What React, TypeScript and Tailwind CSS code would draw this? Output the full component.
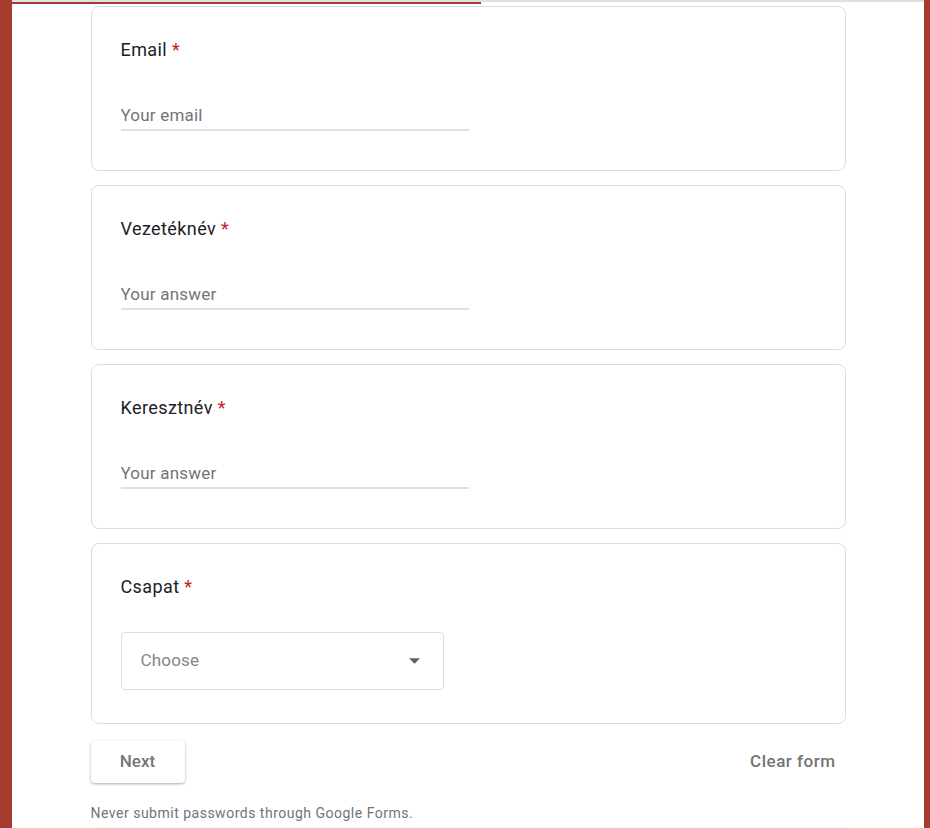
import { ReactNode } from 'react';

const FONT = { fontFamily: 'Roboto, "Liberation Sans", Arial, sans-serif' };

function Card({ children }: { children: ReactNode }) {
  return (
    <div className="w-[755px] mx-auto bg-white border border-[#dadce0] rounded-lg px-[29px] pt-[31px]">
      {children}
    </div>
  );
}

function Title({ label }: { label: string }) {
  return (
    <div className="text-[18px] leading-6 tracking-[0.4px] text-[#202124]">
      {label} <span className="text-[#c5221f]">*</span>
    </div>
  );
}

function TextQuestion({ label, placeholder }: { label: string; placeholder: string }) {
  return (
    <Card>
      <div className="pb-[39px]">
        <Title label={label} />
        <div className="mt-[41px] w-[348px] border-b-2 border-[#e0e0e0] pb-[1px]">
          <input
            type="text"
            placeholder={placeholder}
            className="w-full text-[17px] leading-6 tracking-[0.2px] outline-none bg-transparent text-[#202124] placeholder-[#70757a]"
          />
        </div>
      </div>
    </Card>
  );
}

export default function App() {
  return (
    <div className="flex min-h-[828px] bg-white" style={FONT}>
      <div className="w-[12px] shrink-0 bg-[#a63b2d]" />
      <div className="flex-1 min-w-0">
        <div className="h-[2px] bg-[#e0e0e0]" />
        <div className="h-[2px]">
          <div className="h-full w-[469px] bg-[#a63b2d]" />
        </div>

        <div className="mt-[2px] flex flex-col gap-[14px]">
          <TextQuestion label="Email" placeholder="Your email" />
          <TextQuestion label="Vezetéknév" placeholder="Your answer" />
          <TextQuestion label="Keresztnév" placeholder="Your answer" />

          <Card>
            <div className="pb-[33px]">
              <Title label="Csapat" />
              <div className="mt-[33px] w-[323px] h-[58px] border border-[#dadce0] rounded flex items-center justify-between pl-[19px] pr-[23px]">
                <span className="text-[17px] tracking-[0.2px] text-[#80868b]">Choose</span>
                <svg width="11" height="6" viewBox="0 0 10 5" className="text-[#5f6368]">
                  <path d="M0 0l5 5 5-5z" fill="currentColor" />
                </svg>
              </div>
            </div>
          </Card>
        </div>

        <div className="w-[755px] mx-auto mt-[17px] flex items-center justify-between">
          <button className="w-[94px] h-[42px] rounded bg-white text-[17px] font-medium text-[#757575] shadow-[0_1px_3px_rgba(60,64,67,0.3),0_1px_2px_rgba(60,64,67,0.15)]">
            Next
          </button>
          <button className="pr-[10px] text-[17px] font-medium tracking-[0.5px] text-[#757575]">Clear form</button>
        </div>

        <div className="w-[755px] mx-auto mt-[22px] text-[14px] leading-4 tracking-[0.5px] text-[#70757a]">
          Never submit passwords through Google Forms.
        </div>
        <div className="w-[755px] mx-auto mt-[5px] h-[6px] bg-[#f8f9fa]" />
      </div>
      <div className="w-[6px] shrink-0 bg-[#a63b2d]" />
    </div>
  );
}
